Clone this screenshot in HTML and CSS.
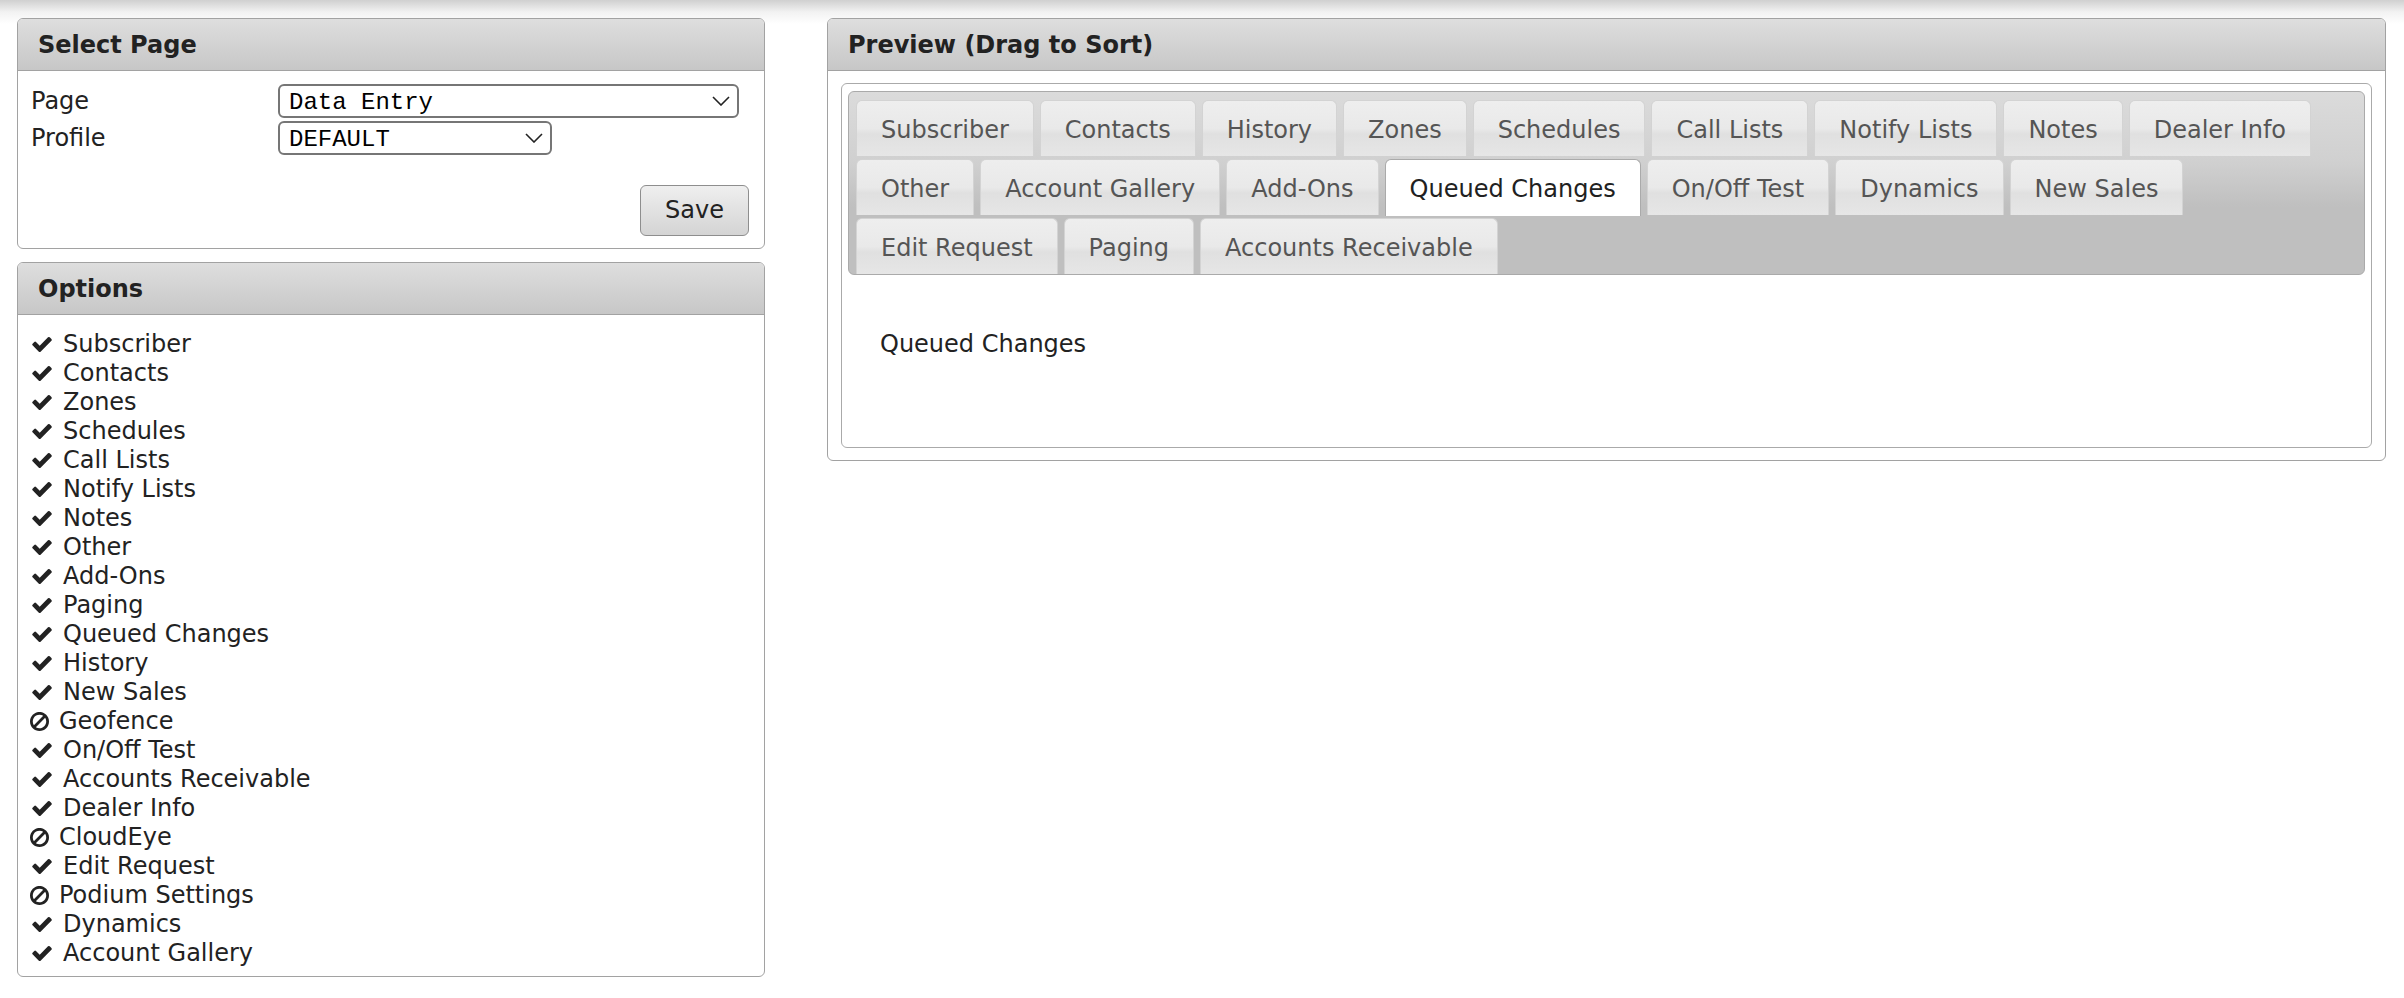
FILE: index.html
```html
<!DOCTYPE html>
<html lang="en">
<head>
    <meta charset="UTF-8">
    <meta name="viewport" content="width=device-width, initial-scale=1.0">
    <title>Page Layout</title>
    <link rel="stylesheet" href="styles.css">
</head>
<body>
    <svg class="sprite" xmlns="http://www.w3.org/2000/svg">
        <symbol id="i-check" viewBox="121 334 1550 1188">
            <path d="M1671 566q0 40-28 68l-724 724-136 136q-28 28-68 28t-68-28l-136-136-362-362q-28-28-28-68t28-68l136-136q28-28 68-28t68 28l294 295 656-657q28-28 68-28t68 28l136 136q28 28 28 68z"/>
        </symbol>
        <symbol id="i-ban" viewBox="128 128 1536 1536">
            <path d="M1440 893q0-161-87-295l-754 753q137 89 297 89 111 0 211.5-43.5t173.5-116.5 116-174.5 43-212.5zm-999 299l755-754q-135-91-300-91-148 0-273 73t-198 199-73 274q0 162 89 299zm1223-299q0 157-61 300t-163.5 246-245 164-298.5 61-298.5-61-245-164-163.5-246-61-300 61-299.5 163.5-245.5 245-164 298.5-61 298.5 61 245 164 163.5 245.5 61 299.5z"/>
        </symbol>
        <symbol id="i-chevron" viewBox="0 0 18 10">
            <path d="M1 1l8 8 8-8" fill="none" stroke="currentColor" stroke-width="1.6"/>
        </symbol>
    </svg>

    <div class="layout">
        <div class="side">
            <div class="panel">
                <div class="panel-head">Select Page</div>
                <div class="panel-body">
                    <div class="field">
                        <label>Page</label>
                        <div class="select wide">
                            <span>Data Entry</span>
                            <svg class="chevron"><use href="#i-chevron"></use></svg>
                        </div>
                    </div>
                    <div class="field">
                        <label>Profile</label>
                        <div class="select narrow">
                            <span>DEFAULT</span>
                            <svg class="chevron"><use href="#i-chevron"></use></svg>
                        </div>
                    </div>
                    <div class="actions">
                        <button class="btn">Save</button>
                    </div>
                </div>
            </div>

            <div class="panel">
                <div class="panel-head">Options</div>
                <ul class="option-list">
                    <li><svg class="ico check"><use href="#i-check"></use></svg>Subscriber</li>
                    <li><svg class="ico check"><use href="#i-check"></use></svg>Contacts</li>
                    <li><svg class="ico check"><use href="#i-check"></use></svg>Zones</li>
                    <li><svg class="ico check"><use href="#i-check"></use></svg>Schedules</li>
                    <li><svg class="ico check"><use href="#i-check"></use></svg>Call Lists</li>
                    <li><svg class="ico check"><use href="#i-check"></use></svg>Notify Lists</li>
                    <li><svg class="ico check"><use href="#i-check"></use></svg>Notes</li>
                    <li><svg class="ico check"><use href="#i-check"></use></svg>Other</li>
                    <li><svg class="ico check"><use href="#i-check"></use></svg>Add-Ons</li>
                    <li><svg class="ico check"><use href="#i-check"></use></svg>Paging</li>
                    <li><svg class="ico check"><use href="#i-check"></use></svg>Queued Changes</li>
                    <li><svg class="ico check"><use href="#i-check"></use></svg>History</li>
                    <li><svg class="ico check"><use href="#i-check"></use></svg>New Sales</li>
                    <li><svg class="ico ban"><use href="#i-ban"></use></svg>Geofence</li>
                    <li><svg class="ico check"><use href="#i-check"></use></svg>On/Off Test</li>
                    <li><svg class="ico check"><use href="#i-check"></use></svg>Accounts Receivable</li>
                    <li><svg class="ico check"><use href="#i-check"></use></svg>Dealer Info</li>
                    <li><svg class="ico ban"><use href="#i-ban"></use></svg>CloudEye</li>
                    <li><svg class="ico check"><use href="#i-check"></use></svg>Edit Request</li>
                    <li><svg class="ico ban"><use href="#i-ban"></use></svg>Podium Settings</li>
                    <li><svg class="ico check"><use href="#i-check"></use></svg>Dynamics</li>
                    <li><svg class="ico check"><use href="#i-check"></use></svg>Account Gallery</li>
                </ul>
            </div>
        </div>

        <div class="panel">
            <div class="panel-head">Preview (Drag to Sort)</div>
            <div class="panel-body">
                <div class="tabs">
                    <ul class="tab-nav">
                        <li class="tab">Subscriber</li>
                        <li class="tab">Contacts</li>
                        <li class="tab">History</li>
                        <li class="tab">Zones</li>
                        <li class="tab">Schedules</li>
                        <li class="tab">Call Lists</li>
                        <li class="tab">Notify Lists</li>
                        <li class="tab">Notes</li>
                        <li class="tab">Dealer Info</li>
                        <li class="tab">Other</li>
                        <li class="tab">Account Gallery</li>
                        <li class="tab">Add-Ons</li>
                        <li class="tab active">Queued Changes</li>
                        <li class="tab">On/Off Test</li>
                        <li class="tab">Dynamics</li>
                        <li class="tab">New Sales</li>
                        <li class="tab">Edit Request</li>
                        <li class="tab">Paging</li>
                        <li class="tab">Accounts Receivable</li>
                    </ul>
                    <div class="tab-panel">Queued Changes</div>
                </div>
            </div>
        </div>
    </div>
</body>
</html>
```

FILE: styles.css
```css
body {
    margin: 0;
    font-family: "DejaVu Sans", Verdana, sans-serif;
    font-size: 24px;
    line-height: 29px;
    color: #222;
    background: #fff linear-gradient(#d0d0d0, #f2f2f2 12px, #fff 24px) no-repeat;
}

.sprite {
    display: none;
}

.layout {
    display: grid;
    grid-template-columns: 748px 1fr;
    column-gap: 62px;
    align-items: start;
    padding: 18px 18px 0 17px;
}

.side {
    display: flex;
    flex-direction: column;
    gap: 13px;
}

.panel {
    border: 1px solid #a2a2a2;
    border-radius: 6px;
    background: #fff;
    overflow: hidden;
}

.panel-head {
    padding: 12px 20px 10px;
    font-weight: bold;
    color: #222;
    background: linear-gradient(#dedede, #c7c7c7);
    border-bottom: 1px solid #a2a2a2;
}

.panel-body {
    padding: 12px 13px;
}

/* select page form */
.field {
    display: grid;
    grid-template-columns: 247px auto;
    align-items: center;
    justify-items: start;
}

.field label {
    padding-top: 1px;
}

.field:first-child {
    margin-top: 1px;
}

.field + .field {
    margin-top: 3px;
}

.select {
    display: flex;
    align-items: center;
    justify-content: space-between;
    box-sizing: border-box;
    height: 34px;
    padding: 2px 7px 0 9px;
    border: 2px solid #767676;
    border-radius: 6px;
    font-family: "Liberation Mono", monospace;
    font-size: 24px;
    color: #000;
    background: #fff;
}

.select.wide {
    width: 461px;
}

.select.narrow {
    width: 274px;
}

.chevron {
    width: 18px;
    height: 10px;
    margin-bottom: 2px;
    color: #222;
}

.actions {
    display: flex;
    justify-content: flex-end;
    margin-top: 30px;
    padding-right: 2px;
}

.btn {
    height: 51px;
    padding: 0 24px;
    font: inherit;
    color: #222;
    border: 1px solid #8e8e8e;
    border-radius: 6px;
    background: linear-gradient(#efefef, #d4d4d4);
    cursor: pointer;
}

/* options list */
.option-list {
    list-style: none;
    margin: 0;
    padding: 15px 13px 8px;
}

.ico {
    fill: #222;
}

.ico.check {
    width: 20px;
    height: 15px;
    margin: 0 11px 0 1px;
}

.ico.ban {
    width: 19px;
    height: 19px;
    margin: 0 10px 0 -1px;
    vertical-align: -2px;
}

/* tabs preview */
.tabs {
    border: 1px solid #aaa;
    border-radius: 6px;
    padding: 7px 6px 6px;
    background: #fff;
}

.tab-nav {
    display: flex;
    flex-wrap: wrap;
    align-items: flex-start;
    list-style: none;
    margin: 0;
    padding: 5px 7px 0;
    border: 1px solid #aaa;
    border-radius: 6px;
    background: linear-gradient(#dbdbdb, #d0d0d0 70px, #bfbfbf 115px);
}

.tab {
    margin: 3px 6px 0 0;
    padding: 14px 24px 10px;
    line-height: 31px;
    color: #555;
    border: 1px solid #d3d3d3;
    border-bottom: 0;
    border-radius: 6px 6px 0 0;
    background: linear-gradient(#eeeeee, #e9e9e9 50%, #e0e0e0 60%, #e6e6e6);
    cursor: move;
}

.tab.active {
    padding-bottom: 11px;
    margin-bottom: -1px;
    color: #212121;
    border-color: #aaa;
    background: #fff;
}

.tab-panel {
    box-sizing: border-box;
    min-height: 166px;
    padding: 55px 32px 0;
    color: #222;
}
```
